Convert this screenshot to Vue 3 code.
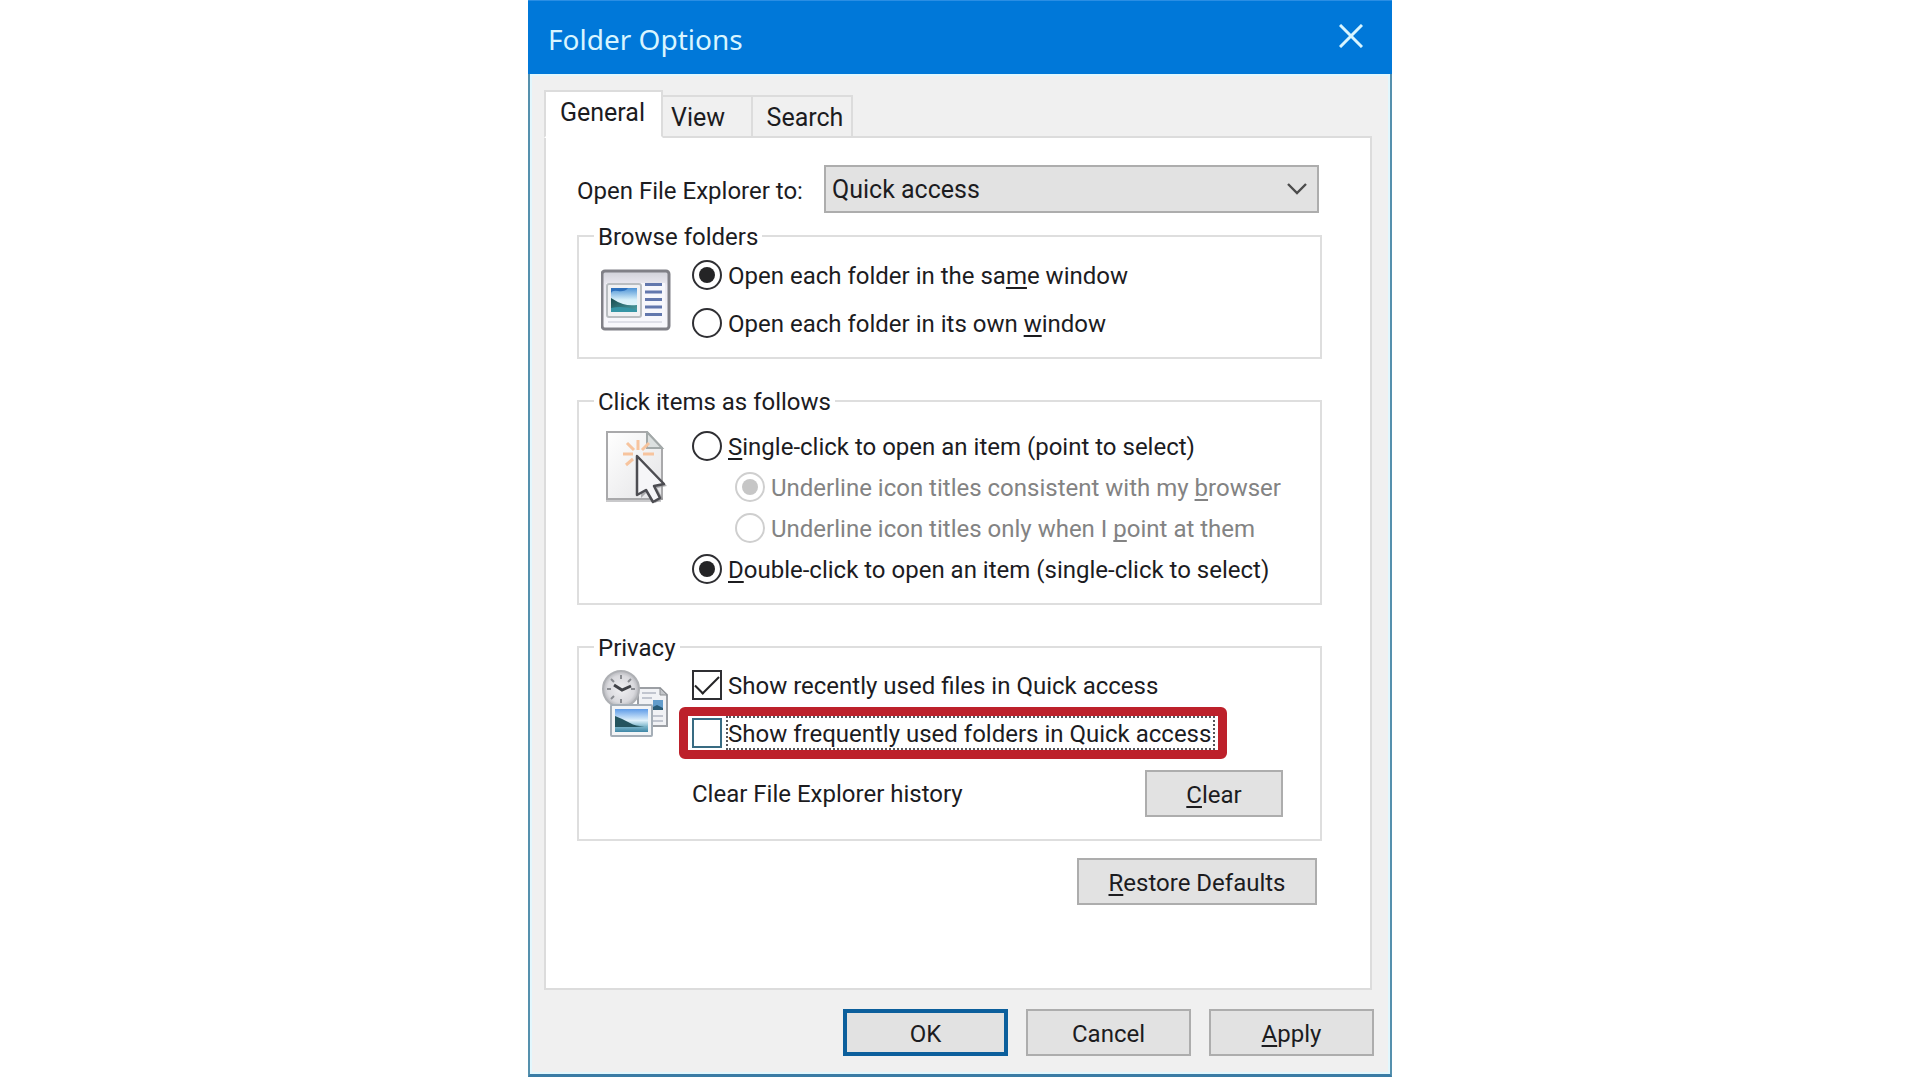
<script setup>
import { ref } from 'vue'

const target = ref('quick')
const browse = ref('same')
const click = ref('double')
const underline = ref('browser')
const showFiles = ref(true)
const showFolders = ref(false)
</script>

<template>
  <main class="dialog">
    <header class="titlebar">
      <h1>Folder Options</h1>
      <button class="close" type="button" aria-label="Close">
        <svg viewBox="0 0 24 24" width="24" height="24" aria-hidden="true">
          <path d="M1 1L23 23M23 1L1 23" fill="none" stroke="#d8f5ff" stroke-width="3" />
        </svg>
      </button>
    </header>

    <div class="body">
      <nav class="tabs" role="tablist">
        <button class="tab active" type="button" role="tab" aria-selected="true">General</button>
        <button class="tab view" type="button" role="tab" aria-selected="false">View</button>
        <button class="tab search" type="button" role="tab" aria-selected="false">Search</button>
      </nav>

      <section class="panel" role="tabpanel">
        <div class="target">
          <label for="target">Open File Explorer to:</label>
          <div class="select">
            <select id="target" v-model="target">
              <option value="quick">Quick access</option>
              <option value="pc">This PC</option>
            </select>
            <svg class="chevron" viewBox="0 0 20 12" width="20" height="12" aria-hidden="true">
              <path d="M1 1L10 10L19 1" fill="none" stroke="#4c4c4c" stroke-width="2.4" />
            </svg>
          </div>
        </div>

        <fieldset class="group browse">
          <legend>Browse folders</legend>
          <div class="inner">
            <div class="icon">
              <svg viewBox="0 0 70 62" width="70" height="62" aria-hidden="true">
                <defs>
                  <linearGradient id="frame" x1="0" y1="0" x2="0" y2="1">
                    <stop offset="0" stop-color="#cfd0d8" />
                    <stop offset="0.25" stop-color="#eceaf2" />
                    <stop offset="1" stop-color="#f8f8fc" />
                  </linearGradient>
                  <linearGradient id="sky" x1="0" y1="0" x2="0" y2="1">
                    <stop offset="0" stop-color="#4d93d6" />
                    <stop offset="0.5" stop-color="#d9f1fa" />
                    <stop offset="1" stop-color="#e8f8fa" />
                  </linearGradient>
                  <linearGradient id="hill" x1="0" y1="0" x2="1" y2="1">
                    <stop offset="0" stop-color="#17494c" />
                    <stop offset="1" stop-color="#4fa3a8" />
                  </linearGradient>
                </defs>
                <rect x="1" y="2" width="67" height="58" rx="3" fill="url(#frame)" stroke="#808087" stroke-width="3" />
                <rect x="5" y="14" width="59" height="42" fill="#f7f7fc" />
                <rect x="6" y="15" width="34" height="33" rx="2" fill="#f0f1f3" stroke="#b9bdc1" stroke-width="2" />
                <rect x="10" y="19" width="26" height="24" fill="url(#sky)" />
                <path d="M10 19h17q-3 4-10 3t-7 3z" fill="#2d70bd" />
                <path d="M10 29Q16 33 22 35T36 36V43H10Z" fill="url(#hill)" />
                <path d="M10 39Q22 36 36 41V43H10Z" fill="#3695a5" />
                <path d="M44 15.500h17M44 23h17M44 30.500h17M44 38h17M44 45.500h17" stroke="#6277ad" stroke-width="3" />
                <path d="M7 53h54" stroke="#dedfe8" stroke-width="2" />
              </svg>
            </div>
            <div class="options">
              <label class="option">
                <input v-model="browse" type="radio" name="browse" value="same" />
                <span>Open each folder in the sa<u>m</u>e window</span>
              </label>
              <label class="option">
                <input v-model="browse" type="radio" name="browse" value="own" />
                <span>Open each folder in its own <u>w</u>indow</span>
              </label>
            </div>
          </div>
        </fieldset>

        <fieldset class="group click">
          <legend>Click items as follows</legend>
          <div class="inner">
            <div class="icon">
              <svg viewBox="0 0 70 76" width="70" height="76" aria-hidden="true">
                <defs>
                  <linearGradient id="paper" x1="0" y1="0" x2="1" y2="1">
                    <stop offset="0" stop-color="#ffffff" />
                    <stop offset="1" stop-color="#e4e4e6" />
                  </linearGradient>
                </defs>
                <path d="M6 1H46L61 17V68H6Z" fill="url(#paper)" stroke="#a9a9ab" stroke-width="2" />
                <path d="M5 70H60" stroke="#c9c9cb" stroke-width="2" />
                <path d="M46 1V17H61Z" fill="#dce0e0" stroke="#a3a9a9" stroke-width="2" />
                <path d="M37 9V19M37 26V34M22 23H32M42 23H53M26 12L33 19M48 12L41 19M32 28L25 34" fill="none" stroke="#f7c49e" stroke-width="3" />
                <path d="M41 30L66 55L56 57L62 68L54 72L46 61L40 67Z" fill="#8f8f92" opacity="0.7" />
                <path d="M36 25L63 53L53 55L59 67L52 71L45 59L36 64Z" fill="#f6f6f8" stroke="#4d4d52" stroke-width="2.500" stroke-linejoin="round" />
              </svg>
            </div>
            <div class="options">
              <label class="option">
                <input v-model="click" type="radio" name="click" value="single" />
                <span><u>S</u>ingle-click to open an item (point to select)</span>
              </label>
              <label class="option sub">
                <input v-model="underline" type="radio" name="underline" value="browser" disabled />
                <span>Underline icon titles consistent with my <u>b</u>rowser</span>
              </label>
              <label class="option sub">
                <input v-model="underline" type="radio" name="underline" value="point" disabled />
                <span>Underline icon titles only when I <u>p</u>oint at them</span>
              </label>
              <label class="option">
                <input v-model="click" type="radio" name="click" value="double" />
                <span><u>D</u>ouble-click to open an item (single-click to select)</span>
              </label>
            </div>
          </div>
        </fieldset>

        <fieldset class="group privacy">
          <legend>Privacy</legend>
          <div class="inner">
            <div class="icon">
              <svg viewBox="0 0 70 68" width="70" height="68" aria-hidden="true">
                <defs>
                  <linearGradient id="lake" x1="0" y1="0" x2="0" y2="1">
                    <stop offset="0" stop-color="#5e9be8" />
                    <stop offset="0.5" stop-color="#dff1fb" />
                    <stop offset="0.75" stop-color="#7fb8cc" />
                    <stop offset="1" stop-color="#3f87a6" />
                  </linearGradient>
                  <radialGradient id="face">
                    <stop offset="0" stop-color="#f0f0f2" />
                    <stop offset="0.75" stop-color="#d9d9dd" />
                    <stop offset="1" stop-color="#b4b5ba" />
                  </radialGradient>
                </defs>
                <path d="M37 18H59L66 25V56H37Z" fill="#f1f2f5" stroke="#9c9fa4" stroke-width="2" />
                <path d="M59 18V25H66Z" fill="#c3c6ca" stroke="#8d9094" />
                <path d="M41 23H55M41 28H51M41 46H62M41 51H62" stroke="#c1c5cf" stroke-width="2" />
                <rect x="52" y="30" width="10" height="10" fill="#629ccb" />
                <path d="M52 37L56 35L62 38V40H52Z" fill="#285b77" />
                <circle cx="20" cy="19" r="18" fill="url(#face)" stroke="#aeb0b4" stroke-width="2" />
                <path d="M20 5V9M20 29V33M6 19H10M30 19H34M10 9L13 12M30 9L27 12M10 29L13 26" stroke="#898b90" stroke-width="2" />
                <path d="M13 15L21 20L30 16" fill="none" stroke="#404247" stroke-width="3" />
                <rect x="10" y="35" width="41" height="31" rx="1" fill="#f2f4f6" stroke="#a5aeb7" stroke-width="2" />
                <rect x="14" y="39" width="33" height="23" fill="url(#lake)" />
                <path d="M14 46Q22 49 29 53T47 56L35 57H14Z" fill="#24545e" />
              </svg>
            </div>
            <div class="options">
              <label class="option">
                <input v-model="showFiles" type="checkbox" />
                <span>Show recently used files in Quick access</span>
              </label>
              <label class="option marked">
                <input v-model="showFolders" type="checkbox" />
                <span>Show frequently used folders in Quick access</span>
              </label>
              <div class="history">
                <span>Clear File Explorer history</span>
                <button class="btn clear" type="button"><u>C</u>lear</button>
              </div>
            </div>
          </div>
        </fieldset>

        <div class="restore">
          <button class="btn wide" type="button"><u>R</u>estore Defaults</button>
        </div>
      </section>

      <footer class="actions">
        <button class="btn default" type="button">OK</button>
        <button class="btn" type="button">Cancel</button>
        <button class="btn" type="button"><u>A</u>pply</button>
      </footer>
    </div>
  </main>
</template>

<style>
body {
  background: #fff;
}
</style>

<style scoped>
* {
  box-sizing: border-box;
}

.dialog {
  display: flex;
  flex-direction: column;
  width: 45%;
  min-width: 800px;
  min-height: 100vh;
  margin: 0 auto;
  background: #f0f0f0;
  color: #1c1c1f;
  font: 24px/28px Roboto, "Liberation Sans", sans-serif;
}

button,
select,
input {
  margin: 0;
  color: inherit;
  font: inherit;
}

u {
  text-decoration-thickness: 2px;
  text-underline-offset: 3px;
  text-decoration-skip-ink: none;
}

.titlebar {
  display: flex;
  align-items: center;
  justify-content: space-between;
  height: 74px;
  padding: 2px 29px 0 20px;
  border-top: 1px solid #2a8ee4;
  background: #0078d9;
  color: #d8f5ff;
}

h1 {
  margin: 0;
  font: 400 28px/36px "Noto Sans", "Open Sans", sans-serif;
}

.close {
  display: flex;
  padding: 0 0 6px;
  border: 0;
  background: none;
}

.body {
  display: flex;
  flex: 1;
  flex-direction: column;
  padding: 16px 16px 18px 14px;
  border: 2px solid #5590ad;
  border-top: 0;
  border-bottom: 3px solid #3a7ca5;
  box-shadow: inset 0 0 0 2px #e2f7fd;
}

.tabs {
  position: relative;
  display: flex;
  align-items: flex-end;
  height: 48px;
  margin-bottom: -2px;
}

.tab {
  width: 100px;
  height: 43px;
  padding: 2px 0 0;
  border: 2px solid #dcdcdc;
  border-left: 0;
  background: #f0f0f0;
  font-size: 25px;
}

.view {
  width: 90px;
  padding-right: 18px;
}

.search {
  padding-left: 6px;
}

.active {
  width: 119px;
  height: 48px;
  padding: 0 2px 3px 0;
  border-bottom-color: #fff;
  border-left: 2px solid #dcdcdc;
  background: #fff;
}

.panel {
  flex: 1;
  margin-right: 2px;
  padding: 27px 48px 24px 31px;
  border: 2px solid #dcdcdc;
  background: #fff;
}

.target {
  display: flex;
  align-items: center;
  margin: 0 3px 9px 0;
}

.target label {
  width: 247px;
  padding-top: 4px;
}

.select {
  position: relative;
  flex: 1;
}

select {
  display: block;
  width: 100%;
  height: 48px;
  padding: 2px 40px 0 6px;
  border: 2px solid #adadad;
  border-radius: 0;
  background: #e2e2e2;
  font-size: 25px;
  appearance: none;
}

.chevron {
  position: absolute;
  top: 18px;
  right: 12px;
  pointer-events: none;
}

.group {
  min-width: 0;
  margin: 0;
  padding: 10px 22px 19px;
  border: 2px solid #dedede;
}

.group + .group {
  margin-top: 28px;
}

legend {
  height: 28px;
  margin-left: -7px;
  padding: 0 4px;
  line-height: 31px;
}

.inner {
  display: flex;
}

.icon {
  width: 91px;
  flex: none;
}

.icon svg {
  display: block;
}

.browse .icon {
  padding-top: 9px;
}

.options {
  display: flex;
  flex: 1;
  flex-direction: column;
  align-items: flex-start;
  gap: 18px;
}

.click {
  padding-top: 16px;
}

.click .options {
  gap: 11px;
}

.option {
  display: flex;
  align-items: center;
  gap: 6px;
  height: 30px;
  white-space: nowrap;
}

.option span {
  padding-top: 2px;
}

.sub {
  margin-left: 43px;
  color: #838383;
}

.option input {
  display: grid;
  place-items: center;
  flex: none;
  width: 30px;
  height: 30px;
  border: 2px solid #2f2f33;
  background: #fff;
  appearance: none;
}

.option input[type='radio'] {
  border-radius: 50%;
}

.option input[type='radio']:checked::before {
  width: 16px;
  height: 16px;
  border-radius: 50%;
  background: #242426;
  content: '';
}

.option input[type='radio']:disabled {
  border-color: #cfcfcf;
}

.option input[type='radio']:disabled::before {
  background: #c6c6c6;
}

.option input[type='checkbox']:checked::before {
  width: 22px;
  height: 10px;
  margin-top: -6px;
  border: solid #242426;
  border-width: 0 0 2px 2px;
  transform: rotate(-45deg);
  content: '';
}

.marked {
  position: relative;
}

.marked::after {
  position: absolute;
  inset: -11px -14px -11px -13px;
  border: 9px solid #bd212b;
  border-radius: 6px;
  content: '';
}

.option.marked input {
  border-color: #386b82;
}

.marked span {
  padding-right: 2px;
  outline: 2px dotted #55555a;
}

.privacy {
  padding-top: 9px;
  padding-bottom: 22px;
}

.history {
  display: flex;
  align-items: center;
  justify-content: space-between;
  align-self: stretch;
  margin: 4px 15px 0 0;
}

.btn {
  width: 165px;
  height: 47px;
  padding: 2px 0 0;
  border: 2px solid #adadad;
  background: #e2e2e2;
}

.clear {
  width: 138px;
}

.wide {
  width: 240px;
}

.restore {
  display: flex;
  justify-content: flex-end;
  margin: 17px 5px 0 0;
}

.default {
  border: 4px solid #0c5f9c;
}

.actions {
  display: flex;
  justify-content: flex-end;
  gap: 18px;
  margin-top: 19px;
}
</style>
